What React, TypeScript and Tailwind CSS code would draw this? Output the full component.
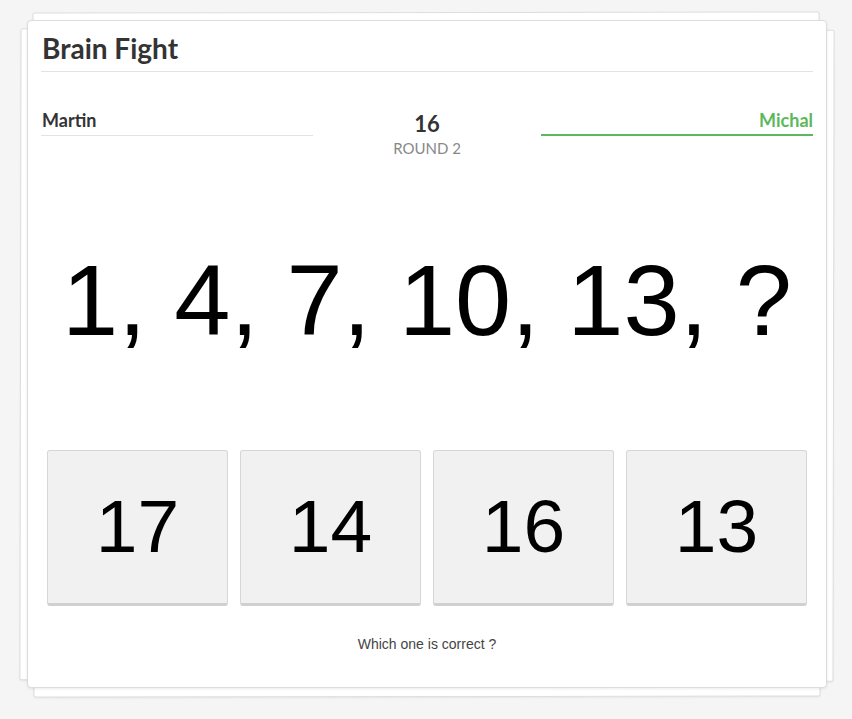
import React from "react";

export default function App() {
  const answers = ["17", "14", "16", "13"];
  return (
    <div className="min-h-screen w-full bg-[#f5f5f5] pt-[20px] pl-[27px]">
      <div className="relative w-[800px]">
        <div className="absolute left-[-7px] right-[-7px] top-[9px] bottom-[7px] rotate-[0.1deg] rounded-[2px] border border-[#dedede] bg-white shadow-[0_1px_2px_rgba(0,0,0,0.06)]" />
        <div className="absolute left-[6px] right-[7px] top-[-8px] bottom-[-9px] rotate-[-0.08deg] rounded-[2px] border border-[#dedede] bg-white shadow-[0_1px_2px_rgba(0,0,0,0.06)]" />
        <div className="relative rounded-[4px] border border-[#dcdcdc] bg-white px-[13px] pt-[11px] pb-[33px] shadow-[0_1px_3px_rgba(0,0,0,0.08)]">
          <h1 className="border-b border-[#e3e3e3] pb-[7px] pl-px font-['Lato',sans-serif] text-[28px] font-bold leading-[32px] text-[#333]">
            Brain Fight
          </h1>

          <div className="mt-[36px] grid grid-cols-[272px_228px_272px] items-start font-['Lato',sans-serif]">
            <div className="border-b border-[#e3e3e3] pb-[3px] pl-px text-[18px] font-bold leading-[24px] text-[#333]">
              Martin
            </div>
            <div className="flex flex-col items-center pt-[4px]">
              <div className="text-[22px] font-bold leading-[24px] text-[#333]">16</div>
              <div className="mt-[3px] text-[15px] uppercase leading-[18px] text-[#888]">Round 2</div>
            </div>
            <div className="border-b-2 border-[#5cb85c] pb-[2px] text-right text-[18px] font-bold leading-[24px] text-[#5cb85c]">
              Michal
            </div>
          </div>

          <div className="mt-[93px] text-center font-['Liberation_Sans',Arial,sans-serif] text-[101px] leading-[100px] text-black">
            1, 4, 7, 10, 13, ?
          </div>

          <div className="mt-[100px] grid grid-cols-4 gap-3 px-[6px]">
            {answers.map((a) => (
              <button
                key={a}
                className="flex h-[156px] items-center justify-center rounded-[3px] border border-b-[3px] border-[#d6d6d6] border-b-[#d0d0d0] bg-[#f1f1f1] pb-[2px] font-['Liberation_Sans',Arial,sans-serif] text-[75px] leading-[75px] text-black"
              >
                {a}
              </button>
            ))}
          </div>

          <div className="mt-[28px] text-center font-['Liberation_Sans',Arial,sans-serif] text-[14px] leading-[20px] text-[#444]">
            Which one is correct ?
          </div>
        </div>
      </div>
    </div>
  );
}
